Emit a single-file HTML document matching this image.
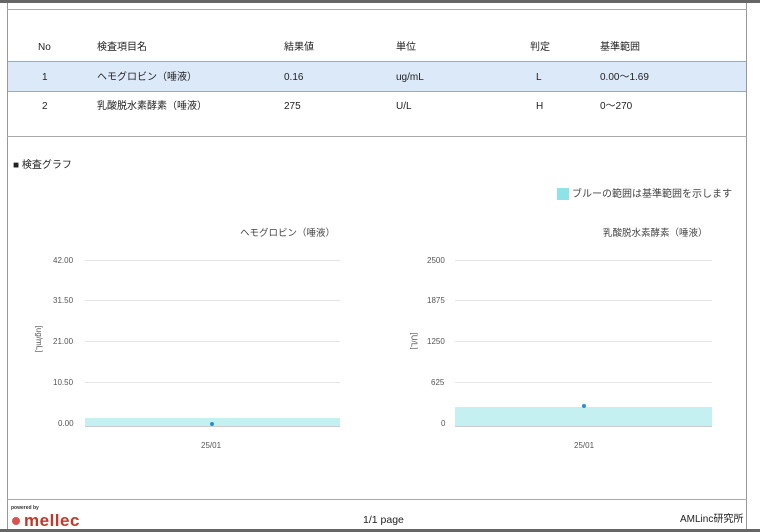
<!DOCTYPE html>
<html><head><meta charset="utf-8"><style>
body{margin:0;width:760px;height:532px;background:#fff;position:relative;overflow:hidden;font-family:"Liberation Sans","Noto Sans CJK JP",sans-serif;color:#222}
.a{position:absolute;white-space:nowrap;line-height:16px}
.t{font-size:10px}
.s{font-size:8px;color:#555}
.g{position:absolute;height:1px;background:#e4e4e4}
</style></head><body>
<div class="a" style="left:0;top:0;width:760px;height:3px;background:#666"></div>
<div class="a" style="left:7px;top:3px;width:1px;height:526px;background:#999"></div>
<div class="a" style="left:746px;top:3px;width:1px;height:526px;background:#999"></div>
<div class="a" style="left:7px;top:9px;width:740px;height:1px;background:#aaa"></div>
<div class="a" style="left:7px;top:136px;width:740px;height:1px;background:#aaa"></div>
<div class="a" style="left:7px;top:499px;width:740px;height:1px;background:#aaa"></div>
<div class="a" style="left:0;top:529px;width:760px;height:3px;background:#666"></div>

<div class="a" style="left:8px;top:61px;width:738px;height:31px;background:#dce9f8;border-top:1px solid #9ab;border-bottom:1px solid #9ab;box-sizing:border-box"></div>

<div class="a t" style="left:38px;top:40px">No</div>
<div class="a t" style="left:97px;top:40px">検査項目名</div>
<div class="a t" style="left:284px;top:40px">結果値</div>
<div class="a t" style="left:396px;top:40px">単位</div>
<div class="a t" style="left:530px;top:40px">判定</div>
<div class="a t" style="left:600px;top:40px">基準範囲</div>

<div class="a t" style="left:42px;top:70px">1</div>
<div class="a t" style="left:97px;top:70px">ヘモグロビン（唾液）</div>
<div class="a t" style="left:284px;top:70px">0.16</div>
<div class="a t" style="left:396px;top:70px">ug/mL</div>
<div class="a t" style="left:536px;top:70px">L</div>
<div class="a t" style="left:600px;top:70px">0.00～1.69</div>

<div class="a t" style="left:42px;top:99px">2</div>
<div class="a t" style="left:97px;top:99px">乳酸脱水素酵素（唾液）</div>
<div class="a t" style="left:284px;top:99px">275</div>
<div class="a t" style="left:396px;top:99px">U/L</div>
<div class="a t" style="left:536px;top:99px">H</div>
<div class="a t" style="left:600px;top:99px">0～270</div>

<div class="a t" style="left:13px;top:158px">■ 検査グラフ</div>

<div class="a" style="left:557px;top:188px;width:12px;height:12px;background:#8ee3e8"></div>
<div class="a t" style="left:572px;top:187px;color:#444">ブルーの範囲は基準範囲を示します</div>

<div class="a" style="left:240px;top:226px;font-size:9.5px;color:#444">ヘモグロビン（唾液）</div>
<div class="a" style="left:603px;top:226px;font-size:9.5px;color:#444">乳酸脱水素酵素（唾液）</div>

<!-- left chart -->
<div class="g" style="left:85px;width:255px;top:260px"></div>
<div class="g" style="left:85px;width:255px;top:300px"></div>
<div class="g" style="left:85px;width:255px;top:341px"></div>
<div class="g" style="left:85px;width:255px;top:382px"></div>
<div class="a" style="left:85px;width:255px;top:418px;height:8px;background:#c5f0f2"></div>
<div class="a" style="left:85px;width:255px;top:426px;height:1px;background:#ccc"></div>
<div class="a" style="left:210px;top:422px;width:4px;height:4px;border-radius:50%;background:#2a8fd4"></div>
<div class="a s" style="left:53px;top:253px">42.00</div>
<div class="a s" style="left:53px;top:293px">31.50</div>
<div class="a s" style="left:53px;top:334px">21.00</div>
<div class="a s" style="left:53px;top:375px">10.50</div>
<div class="a s" style="left:58px;top:416px">0.00</div>
<div class="a s" style="left:201px;top:438px">25/01</div>
<div class="a s" style="left:25px;top:331px;transform:rotate(90deg)">[ug/mL]</div>

<!-- right chart -->
<div class="g" style="left:455px;width:257px;top:260px"></div>
<div class="g" style="left:455px;width:257px;top:300px"></div>
<div class="g" style="left:455px;width:257px;top:341px"></div>
<div class="g" style="left:455px;width:257px;top:382px"></div>
<div class="a" style="left:455px;width:257px;top:407px;height:19px;background:#c5f0f2"></div>
<div class="a" style="left:455px;width:257px;top:426px;height:1px;background:#ccc"></div>
<div class="a" style="left:582px;top:404px;width:4px;height:4px;border-radius:50%;background:#2a8fd4"></div>
<div class="a s" style="left:427px;top:253px">2500</div>
<div class="a s" style="left:427px;top:293px">1875</div>
<div class="a s" style="left:427px;top:334px">1250</div>
<div class="a s" style="left:431px;top:375px">625</div>
<div class="a s" style="left:441px;top:416px">0</div>
<div class="a s" style="left:574px;top:438px">25/01</div>
<div class="a s" style="left:405px;top:333px;transform:rotate(90deg)">[U/L]</div>

<!-- footer -->
<div class="a" style="left:11px;top:505px;font-size:5px;color:#333;font-weight:bold;line-height:6px">powered by</div>
<div class="a" style="left:12px;top:517px;width:8px;height:8px;border-radius:50%;background:#d9534f"></div>
<div class="a" style="left:24px;top:511px;font-size:17px;line-height:20px;color:#c0392b;font-weight:bold;letter-spacing:0.5px">mellec</div>
<div class="a" style="left:363px;top:512px;font-size:10.5px">1/1 page</div>
<div class="a" style="left:680px;top:512px;font-size:10px">AMLinc研究所</div>
</body></html>
